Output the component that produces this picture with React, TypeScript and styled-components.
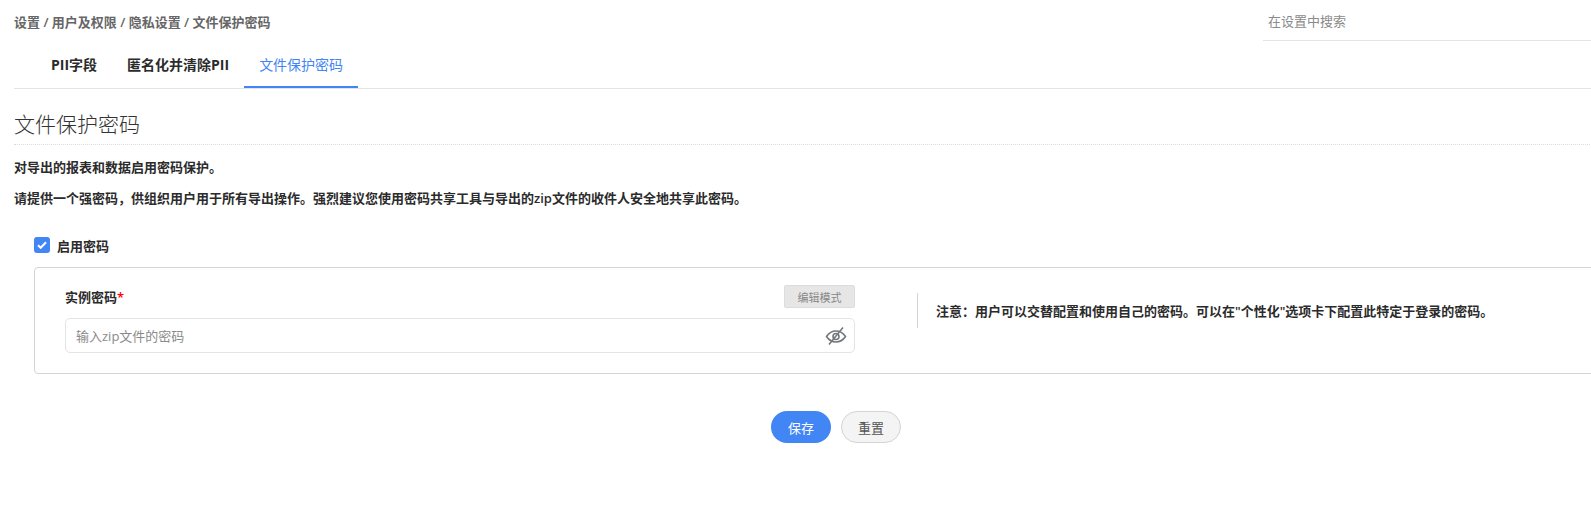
import { useState } from 'react';
import styled, { createGlobalStyle } from 'styled-components';

const tabs = ['PII字段', '匿名化并清除PII', '文件保护密码'];

export default function App() {
  const [enabled, setEnabled] = useState(true);
  const activeTab = 2;

  return (
    <Viewport>
      <GlobalStyle />
      <Page>
        <TopBar>
          <Breadcrumb>设置 / 用户及权限 / 隐私设置 / 文件保护密码</Breadcrumb>
          <SearchInput placeholder="在设置中搜索" />
        </TopBar>
        <TabBar>
          {tabs.map((tab, index) => (
            <Tab key={tab} $active={index === activeTab}>
              {tab}
            </Tab>
          ))}
        </TabBar>
        <Title>文件保护密码</Title>
        <Paragraph>对导出的报表和数据启用密码保护。</Paragraph>
        <Hint>请提供一个强密码，供组织用户用于所有导出操作。强烈建议您使用密码共享工具与导出的zip文件的收件人安全地共享此密码。</Hint>
        <CheckRow onClick={() => setEnabled(!enabled)}>
          <CheckBox $checked={enabled}>
            {enabled && (
              <svg width="10" height="8" viewBox="0 0 10 8" fill="none">
                <path d="M1 4.2 3.7 6.8 9 1.2" stroke="#fff" strokeWidth="2" />
              </svg>
            )}
          </CheckBox>
          启用密码
        </CheckRow>
        <Card>
          <FieldColumn>
            <FieldHeader>
              <FieldLabel>
                实例密码<Required>*</Required>
              </FieldLabel>
              <ModeBadge>编辑模式</ModeBadge>
            </FieldHeader>
            <InputBox>
              <PasswordInput placeholder="输入zip文件的密码" />
              <svg width="22" height="20" viewBox="0 0 22 20" fill="none" stroke="#73787c" strokeWidth="1.6">
                <path d="M1.5 10.5C4 6.8 7.2 5 11 5s7 1.8 9.5 5.5C18 14.2 14.8 16 11 16s-7-1.8-9.5-5.5Z" />
                <circle cx="11" cy="10.5" r="3" />
                <path d="M18 1.5 4 18.5" />
              </svg>
            </InputBox>
          </FieldColumn>
          <Note>注意：用户可以交替配置和使用自己的密码。可以在"个性化"选项卡下配置此特定于登录的密码。</Note>
        </Card>
        <Actions>
          <PrimaryButton>保存</PrimaryButton>
          <SecondaryButton>重置</SecondaryButton>
        </Actions>
      </Page>
    </Viewport>
  );
}

const GlobalStyle = createGlobalStyle`
  html, body {
    margin: 0;
    background: #fff;
    overflow: hidden;
  }
  * {
    box-sizing: border-box;
  }
  input::placeholder {
    color: #8a8a8a;
    opacity: 1;
  }
`;

const Viewport = styled.div`
  width: 1591px;
  height: 508px;
  overflow: hidden;
`;

const Page = styled.div`
  width: 1672px;
  padding-left: 14px;
  font-family: 'Open Sans', 'Noto Sans CJK SC', sans-serif;
  font-size: 13px;
  color: #2b2b2b;
`;

const TopBar = styled.div`
  height: 41px;
  display: flex;
  justify-content: space-between;
  align-items: flex-start;
`;

const Breadcrumb = styled.div`
  margin-top: 13px;
  line-height: 18px;
  font-weight: 600;
  color: #666;
`;

const SearchInput = styled.input`
  width: 409px;
  height: 41px;
  padding: 2px 5px 0;
  border: 0;
  border-bottom: 1px solid #e4e4e4;
  outline: none;
  font: inherit;
`;

const TabBar = styled.div`
  height: 48px;
  padding-left: 22px;
  display: flex;
  border-bottom: 1px solid #e4e4e4;
`;

const Tab = styled.div<{ $active: boolean }>`
  height: 47px;
  padding: 0 15px;
  display: flex;
  align-items: center;
  font-size: 14px;
  font-weight: ${(props) => (props.$active ? 400 : 700)};
  color: ${(props) => (props.$active ? '#4285f4' : '#2b2b2b')};
  border-bottom: 2px solid ${(props) => (props.$active ? '#4285f4' : 'transparent')};
`;

const Title = styled.h1`
  margin: 0 0 13px;
  height: 56px;
  padding-top: 13px;
  display: flex;
  align-items: center;
  font-size: 21px;
  font-weight: 300;
  color: #333;
  border-bottom: 1px dotted #dcdcdc;
`;

const Paragraph = styled.p`
  margin: 0 0 13px;
  line-height: 18px;
  font-weight: 600;
`;

const Hint = styled(Paragraph)`
  margin-bottom: 28px;
`;

const CheckRow = styled.label`
  margin-left: 20px;
  height: 20px;
  display: flex;
  align-items: center;
  gap: 7px;
  font-weight: 600;
`;

const CheckBox = styled.span<{ $checked: boolean }>`
  width: 16px;
  height: 16px;
  display: flex;
  align-items: center;
  justify-content: center;
  border-radius: 3px;
  background: ${(props) => (props.$checked ? '#4285f4' : '#fff')};
`;

const Card = styled.div`
  margin: 12px 0 0 20px;
  width: 1638px;
  height: 107px;
  padding: 17px 30px 0;
  display: flex;
  align-items: flex-start;
  border: 1px solid #d4d4d4;
  border-radius: 4px;
`;

const FieldColumn = styled.div`
  width: 790px;
`;

const FieldHeader = styled.div`
  height: 33px;
  display: flex;
  justify-content: space-between;
  align-items: flex-start;
`;

const FieldLabel = styled.div`
  margin-top: 3px;
  line-height: 18px;
  font-weight: 600;
`;

const Required = styled.span`
  color: #f00;
`;

const ModeBadge = styled.div`
  width: 71px;
  height: 23px;
  display: flex;
  align-items: center;
  justify-content: center;
  font-size: 11px;
  color: #888;
  background: #e6e6e6;
  border: 1px solid #dcdcdc;
  border-radius: 2px;
`;

const InputBox = styled.div`
  height: 35px;
  padding: 0 7px 0 10px;
  display: flex;
  align-items: center;
  border: 1px solid #e4e4e4;
  border-radius: 5px;
`;

const PasswordInput = styled.input`
  flex: 1;
  padding: 0;
  border: 0;
  outline: none;
  font: inherit;
`;

const Note = styled.div`
  margin: 8px 0 0 62px;
  height: 35px;
  padding-left: 18px;
  display: flex;
  align-items: center;
  font-weight: 600;
  border-left: 1px solid #d4d4d4;
`;

const Actions = styled.div`
  margin-top: 37px;
  padding-right: 14px;
  display: flex;
  justify-content: center;
  gap: 10px;
`;

const PrimaryButton = styled.button`
  width: 60px;
  height: 32px;
  padding: 0;
  font: inherit;
  color: #fff;
  background: #4285f4;
  border: 0;
  border-radius: 16px;
`;

const SecondaryButton = styled(PrimaryButton)`
  color: #555;
  background: #f4f4f4;
  border: 1px solid #d4d4d4;
`;
